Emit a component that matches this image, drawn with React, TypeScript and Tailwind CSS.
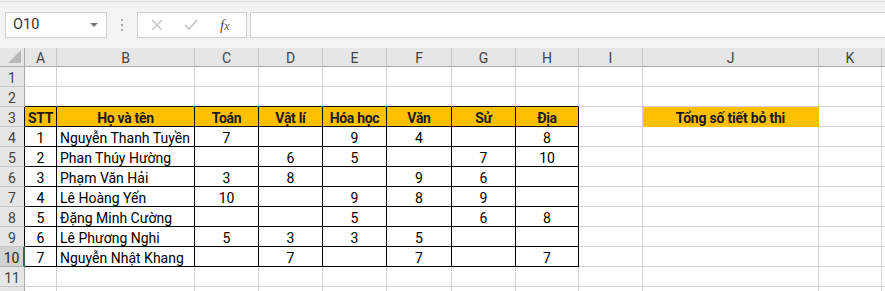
import React from "react";

const cols = ["A", "B", "C", "D", "E", "F", "G", "H", "I", "J", "K"];

const heads = ["STT", "Họ và tên", "Toán", "Vật lí", "Hóa học", "Văn", "Sử", "Địa"];

const students: string[][] = [
  ["1", "Nguyễn Thanh Tuyền", "7", "", "9", "4", "", "8"],
  ["2", "Phan Thúy Hường", "", "6", "5", "", "7", "10"],
  ["3", "Phạm Văn Hải", "3", "8", "", "9", "6", ""],
  ["4", "Lê Hoàng Yến", "10", "", "9", "8", "9", ""],
  ["5", "Đặng Minh Cường", "", "", "5", "", "6", "8"],
  ["6", "Lê Phương Nghi", "5", "3", "3", "5", "", ""],
  ["7", "Nguyễn Nhật Khang", "", "7", "", "7", "", "7"],
];

const Cell = ({ row, col }: { row: number; col: number }) => {
  // row: 1..12, col: 0..10 (A..K), 11 = filler
  const inTable = row >= 3 && row <= 10 && col <= 7;
  if (row === 3 && inTable) {
    return (
      <div className="flex items-center justify-center pt-[2px] whitespace-nowrap tracking-[-0.3px] bg-[#ffc000] border-r border-b border-black font-bold text-[#1a1a1a]">
        {heads[col]}
      </div>
    );
  }
  if (row === 3 && col === 9) {
    return (
      <div className="flex items-center justify-center pt-[2px] whitespace-nowrap tracking-[-0.2px] bg-[#ffc000] border-r border-b border-[#ffc000] font-bold text-[#1a1a1a]">
        Tổng số tiết bỏ thi
      </div>
    );
  }
  if (inTable) {
    const v = students[row - 4][col];
    return (
      <div
        className={
          col === 1
            ? "flex items-center pt-[2px] pl-[3px] whitespace-nowrap border-r border-b border-black text-black"
            : "flex items-center justify-center pt-[2px] border-r border-b border-black text-black"
        }
      >
        {v}
      </div>
    );
  }
  if (row === 2 && col <= 7) {
    return <div className="border-r border-b border-r-[#d4d4d4] border-b-black" />;
  }
  if (col === 11) {
    return <div className="border-b border-[#d4d4d4]" />;
  }
  return <div className="border-r border-b border-[#d4d4d4]" />;
};

const RowHead = ({ n }: { n: number }) => {
  if (n === 10) {
    return (
      <div className="flex items-center justify-center pt-[2px] bg-[#d2d2d2] border-b border-[#ababab] border-r-2 border-r-[#217346] text-[#262626]">
        {n}
      </div>
    );
  }
  return (
    <div
      className={
        n >= 3 && n <= 9
          ? "flex items-center justify-center pt-[2px] bg-[#e6e6e6] border-b border-b-[#c8c8c8] border-r border-r-black text-[#444]"
          : "flex items-center justify-center pt-[2px] bg-[#e6e6e6] border-b border-b-[#c8c8c8] border-r border-r-[#ababab] text-[#444]"
      }
    >
      {n < 12 ? n : ""}
    </div>
  );
};

export default function App() {
  const rows = Array.from({ length: 12 }, (_, i) => i + 1);
  return (
    <div className="w-[885px] h-[291px] overflow-hidden bg-white font-['Roboto','Liberation_Sans',sans-serif] text-[14px] leading-none">
      {/* formula bar */}
      <div className="bg-[#f3f3f3] pt-px">
        <div className="border-t border-[#d9d9d9] h-[47px] flex items-start pt-[10px]">
          <div className="ml-[5px] w-[102px] h-[26px] bg-white border border-[#d2d2d2] flex items-center justify-between pl-[7px] pr-[8px] text-[#333] text-[14.5px]">
            <span>O10</span>
            <span className="w-0 h-0 border-l-[4px] border-r-[4px] border-t-[4px] border-l-transparent border-r-transparent border-t-[#777]" />
          </div>
          <div className="w-[30px] h-[26px] flex flex-col items-center justify-center gap-[3px]">
            <span className="w-[2px] h-[2px] bg-[#a8a8a8]" />
            <span className="w-[2px] h-[2px] bg-[#a8a8a8]" />
            <span className="w-[2px] h-[2px] bg-[#a8a8a8]" />
          </div>
          <div className="w-[110px] h-[26px] bg-white border border-[#d2d2d2] flex items-center">
            <svg width="12" height="12" viewBox="0 0 12 12" className="ml-[13px]">
              <path d="M1 1 L11 11 M11 1 L1 11" stroke="#c4c4c4" strokeWidth="1.4" fill="none" />
            </svg>
            <svg width="14" height="12" viewBox="0 0 14 12" className="ml-[21px]">
              <path d="M1 6 L5 10 L13 1" stroke="#c4c4c4" strokeWidth="1.6" fill="none" />
            </svg>
            <span className="ml-[22px] font-['Liberation_Serif',serif] italic text-[15px] text-[#555]">
              f<span className="text-[12px]">x</span>
            </span>
          </div>
          <div className="ml-[3px] flex-1 h-[26px] bg-white border border-[#d2d2d2] border-r-0" />
        </div>
      </div>
      {/* sheet */}
      <div className="grid grid-cols-[25px_32px_138px_64px_64px_64px_65px_64px_63px_64px_176px_63px_1fr] grid-rows-[19px_repeat(12,20px)]">
        <div className="relative bg-[#e6e6e6] border-r border-b border-[#ababab]">
          <svg width="13" height="13" viewBox="0 0 13 13" className="absolute right-[3px] bottom-[3px]">
            <path d="M13 0 L13 13 L0 13 Z" fill="#b8b8b8" />
          </svg>
        </div>
        {cols.map((c) => (
          <div key={c} className="flex items-center justify-center pt-[2px] bg-[#e6e6e6] border-r border-b border-r-[#c6c6c6] border-b-[#ababab] text-[#444]">
            {c}
          </div>
        ))}
        <div className="bg-[#e6e6e6] border-b border-[#ababab]" />
        {rows.map((r) => (
          <React.Fragment key={r}>
            <RowHead n={r} />
            {Array.from({ length: 12 }, (_, c) => (
              <Cell key={c} row={r} col={c} />
            ))}
          </React.Fragment>
        ))}
      </div>
    </div>
  );
}
